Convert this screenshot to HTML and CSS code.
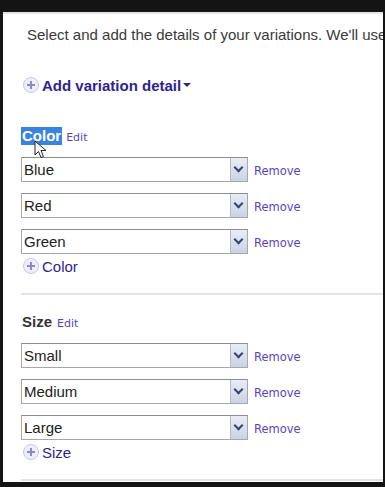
FILE: index.html
```html
<!DOCTYPE html>
<html lang="en">
<head>
    <meta charset="UTF-8">
    <title>Variations</title>
    <link rel="stylesheet" href="styles.css">
</head>
<body>
    <div class="panel">
        <p class="intro">Select and add the details of your variations. We'll use these to create your listings.</p>

        <!-- Add variation -->
        <div class="add-detail">
            <span class="plus"></span>
            <span class="add-detail-text">Add variation detail</span>
            <span class="caret"></span>
        </div>

        <!-- Color section -->
        <div class="section">
            <div class="section-head">
                <span class="section-title selected">Color</span>
                <a class="edit" href="#">Edit</a>
            </div>
            <div class="option-row">
                <div class="select"><span class="select-value">Blue</span><span class="select-btn"></span></div>
                <a class="remove" href="#">Remove</a>
            </div>
            <div class="option-row">
                <div class="select"><span class="select-value">Red</span><span class="select-btn"></span></div>
                <a class="remove" href="#">Remove</a>
            </div>
            <div class="option-row">
                <div class="select"><span class="select-value">Green</span><span class="select-btn"></span></div>
                <a class="remove" href="#">Remove</a>
            </div>
            <div class="add-option"><span class="plus"></span>Color</div>

            <svg class="cursor" width="14" height="20" viewBox="0 0 14 20">
                <path d="M1 1 L1 15 L4.5 11.5 L7 17.5 L9.5 16.5 L7 10.5 L12 10.5 Z" fill="#fff" stroke="#222" stroke-width="1"/>
            </svg>
        </div>

        <!-- Size section -->
        <div class="section">
            <div class="section-head">
                <span class="section-title">Size</span>
                <a class="edit" href="#">Edit</a>
            </div>
            <div class="option-row">
                <div class="select"><span class="select-value">Small</span><span class="select-btn"></span></div>
                <a class="remove" href="#">Remove</a>
            </div>
            <div class="option-row">
                <div class="select"><span class="select-value">Medium</span><span class="select-btn"></span></div>
                <a class="remove" href="#">Remove</a>
            </div>
            <div class="option-row">
                <div class="select"><span class="select-value">Large</span><span class="select-btn"></span></div>
                <a class="remove" href="#">Remove</a>
            </div>
            <div class="add-option"><span class="plus"></span>Size</div>
        </div>
    </div>
</body>
</html>
```

FILE: styles.css
```css
/* Page frame */
body {
    margin: 0;
    background-color: #141414;
    font-family: 'Liberation Sans', Arial, sans-serif;
    overflow: hidden;
}

.panel {
    margin: 12px 2px 0 3px;
    height: 468px;
    background-color: #fff;
    border-top: 2px solid #e3e3e3;
    overflow: hidden;
    white-space: nowrap;
}

.intro {
    margin: 12px 0 0 24px;
    font-size: 15px;
    line-height: 18px;
    color: #3a3a3a;
}

/* Add variation detail */
.add-detail {
    display: flex;
    align-items: center;
    margin: 31px 0 0 20px;
    height: 20px;
}

.add-detail-text {
    margin-left: 3px;
    font-size: 15px;
    font-weight: bold;
    color: #2c2496;
}

.caret {
    margin-left: 2px;
    border-left: 4px solid transparent;
    border-right: 4px solid transparent;
    border-top: 4px solid #2c2496;
}

.plus {
    position: relative;
    display: inline-block;
    width: 14px;
    height: 14px;
    border: 1px solid #c9c5ee;
    border-radius: 50%;
    background-color: #efeefb;
}

.plus::before,
.plus::after {
    content: '';
    position: absolute;
    background-color: #8b86d6;
}

.plus::before {
    left: 3px;
    top: 6px;
    width: 8px;
    height: 2px;
}

.plus::after {
    left: 6px;
    top: 3px;
    width: 2px;
    height: 8px;
}

/* Sections */
.section {
    position: relative;
    margin-left: 18px;
    padding-top: 32px;
    padding-bottom: 18px;
    border-bottom: 2px solid #e3e3e3;
}

.section + .section {
    padding-top: 18px;
}

.section-head {
    display: flex;
    align-items: center;
    height: 18px;
    margin-bottom: 12px;
}

.section-title {
    padding: 0 1px;
    font-size: 15px;
    font-weight: bold;
    line-height: 18px;
    color: #333;
}

.section-title.selected {
    background-color: #3b83e2;
    color: #fff;
}

.edit {
    margin-left: 4px;
    margin-top: 2px;
    font-family: 'DejaVu Sans', Verdana, sans-serif;
    font-size: 11px;
    color: #5a3fc6;
    text-decoration: none;
}

.option-row {
    display: flex;
    align-items: center;
    margin-bottom: 11px;
}

.option-row:nth-of-type(4) {
    margin-bottom: 3px;
}

.select {
    display: flex;
    width: 225px;
    height: 23px;
    border: 1px solid #a7a7a7;
    border-top-color: #8e8e8e;
    background-color: #fff;
}

.select-value {
    flex: 1;
    padding-left: 2px;
    font-size: 15px;
    line-height: 23px;
    color: #222;
}

.select-btn {
    position: relative;
    width: 16px;
    border-left: 1px solid #b4bccb;
    background: linear-gradient(#e8edf6, #c9d3e6);
}

.select-btn::after {
    content: '';
    position: absolute;
    left: 4px;
    top: 6px;
    width: 5px;
    height: 5px;
    border-right: 2px solid #34466b;
    border-bottom: 2px solid #34466b;
    transform: rotate(45deg);
}

.remove {
    margin-left: 6px;
    margin-top: 3px;
    font-family: 'DejaVu Sans', Verdana, sans-serif;
    font-size: 11.5px;
    color: #5a3fc6;
    text-decoration: none;
}

.add-option {
    display: flex;
    align-items: center;
    gap: 3px;
    height: 18px;
    padding-left: 2px;
    font-size: 15px;
    color: #2c2496;
}

.cursor {
    position: absolute;
    left: 13px;
    top: 45px;
}
```
